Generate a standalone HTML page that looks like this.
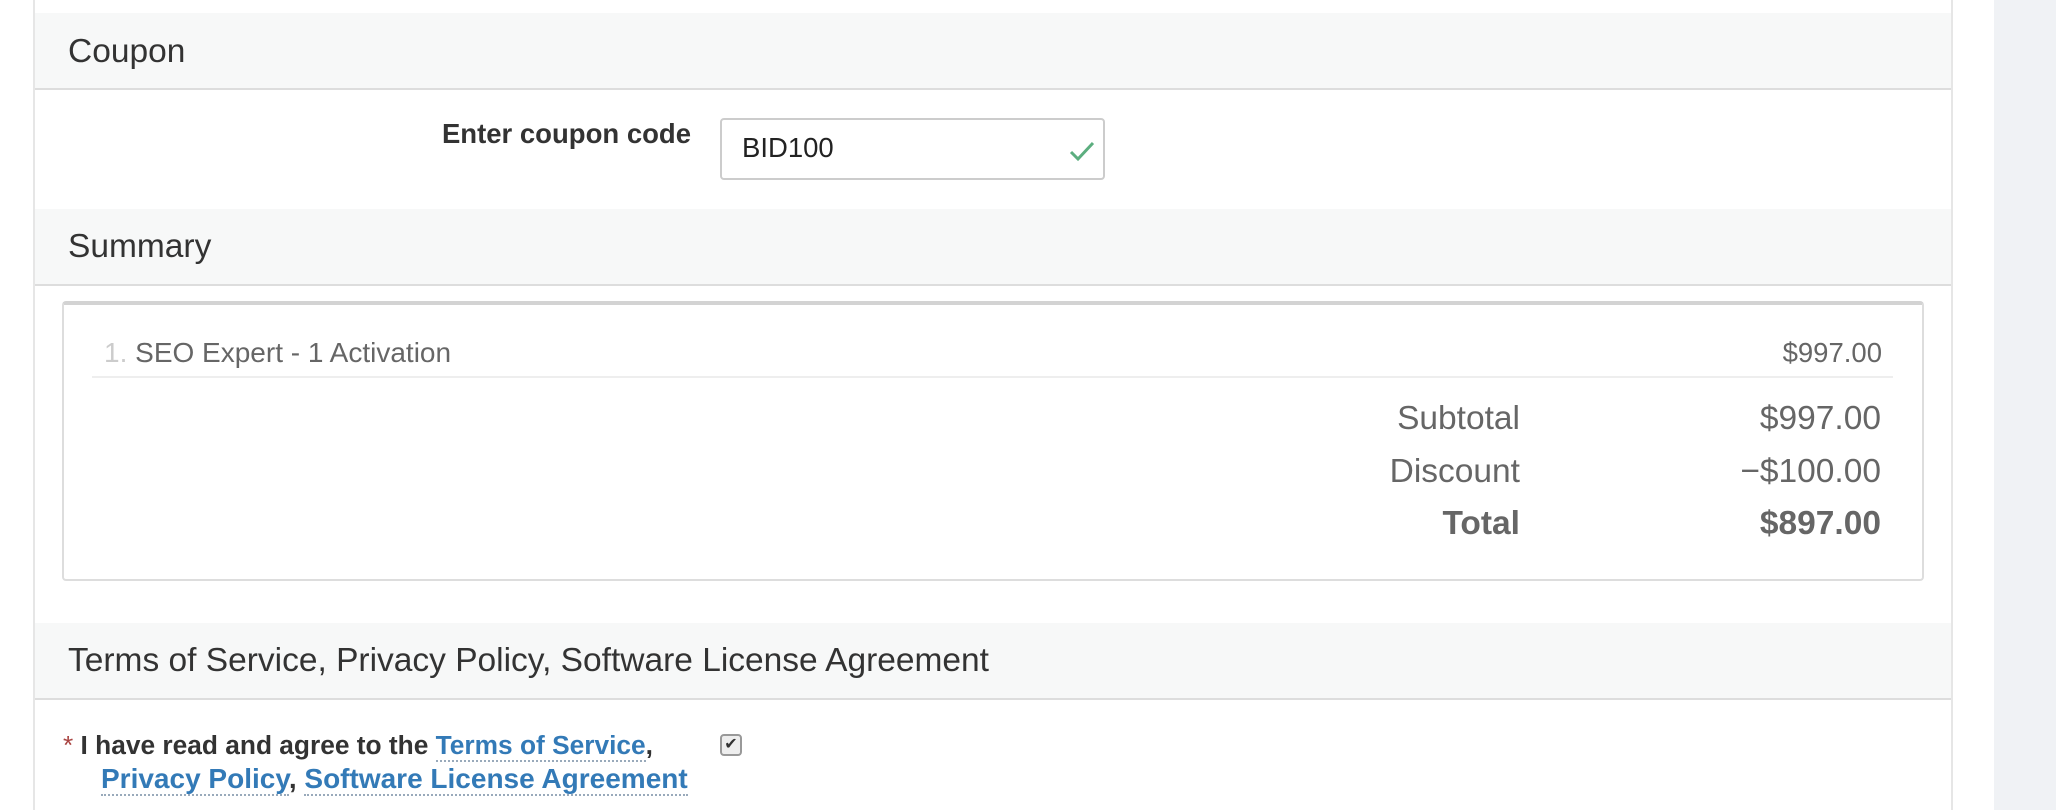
<!DOCTYPE html>
<html><head><meta charset="utf-8"><style>
*{box-sizing:border-box;margin:0;padding:0}
body{width:2056px;height:810px;background:#fff;font-family:"Liberation Sans",Arial,sans-serif;position:relative;overflow:hidden;color:#333}
.side{position:absolute;left:1994px;top:0;width:62px;height:810px;background:#f0f2f5}
.bl{position:absolute;left:33px;top:0;width:2px;height:810px;background:#e6e6e6}
.br{position:absolute;left:1951px;top:0;width:2px;height:810px;background:#e6e6e6}
.hd{position:absolute;left:35px;width:1916px;background:#f7f8f8;border-bottom:2px solid #ddd;font-size:33.5px;padding-left:33px}
.a{position:absolute;white-space:nowrap}
.box{position:absolute;left:62px;top:301px;width:1862px;height:280px;border:2px solid #ddd;border-top:4px solid #d3d3d3;border-radius:4px}
a{color:#337ab7;text-decoration:none;border-bottom:2px dotted #9ab}
</style></head><body>
<div class="side"></div><div class="bl"></div><div class="br"></div>
<div class="hd" style="top:13px;height:77px;line-height:77px">Coupon</div>
<div class="a" style="right:1365px;top:118px;font-size:27.5px;font-weight:bold">Enter coupon code</div>
<div class="a" style="left:720px;top:118px;width:385px;height:62px;border:2px solid #ccc;border-radius:4px"></div>
<div class="a" style="left:742px;top:132px;font-size:27.5px;color:#222">BID100</div>
<svg class="a" style="left:1068px;top:140px" width="28" height="22" viewBox="0 0 28 22"><path d="M3 12 L10 19 L25 3" fill="none" stroke="#5cae7f" stroke-width="3"/></svg>
<div class="hd" style="top:209px;height:77px;line-height:76px">Summary</div>
<div class="box"></div>
<div class="a" style="left:104px;top:337px;font-size:28px;color:#666"><span style="color:#ccc">1.</span> SEO Expert - 1 Activation</div>
<div class="a" style="right:174px;top:337px;font-size:27.5px;color:#666">$997.00</div>
<div class="a" style="left:92px;top:376px;width:1801px;height:2px;background:#eee"></div>
<div class="a" style="right:536px;top:393px;font-size:33.5px;color:#666;line-height:52.5px;text-align:right">Subtotal<br>Discount<br><b>Total</b></div>
<div class="a" style="right:175px;top:393px;font-size:33.5px;color:#666;line-height:52.5px;text-align:right;width:300px;">$997.00<br>−$100.00<br><b>$897.00</b></div>
<div class="hd" style="top:623px;height:77px;line-height:76px">Terms of Service, Privacy Policy, Software License Agreement</div>
<div class="a" style="left:63px;top:729px;font-size:26.3px;font-weight:bold;line-height:33px"><span style="color:#a94442;font-weight:normal">*</span> I have read and agree to the <a>Terms of Service</a>,<br><span style="padding-left:38px;font-size:28px"><a>Privacy Policy</a>, <a>Software License Agreement</a></span></div>
<div class="a" style="left:720px;top:734px;width:22px;height:22px;border:2px solid #999;border-radius:4px;background:#eee;font-size:16px;line-height:18px;text-align:center">✔</div>
</body></html>
